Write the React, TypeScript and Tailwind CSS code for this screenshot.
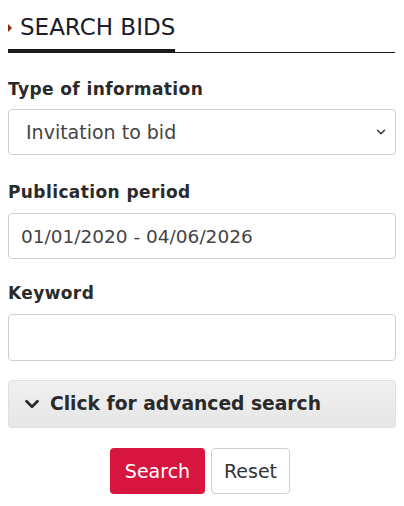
import { ChevronDown } from 'lucide-react';

export default function App() {
  return (
    <div className="w-[404px] h-[506px] bg-white font-['DejaVu_Sans',sans-serif] text-[#222]">
      <div className="px-2 pt-[12px]">
        {/* Title */}
        <div className="flex items-center h-[30px]">
          <span className="w-0 h-0 border-y-[4px] border-y-transparent border-l-[4px] border-l-[#8b2a12] mr-[8px] mt-[2px]" />
          <h1 className="text-[23px] leading-none text-[#1c1c2a] uppercase">Search Bids</h1>
        </div>
        <div className="flex items-end mt-[7px]">
          <div className="w-[167px] h-[4px] bg-[#1a1a1a]" />
          <div className="flex-1 h-px bg-[#1a1a1a] mr-[1px]" />
        </div>

        {/* Form */}
        <div className="mt-[24px]">
          <label className="block text-[17px] font-bold leading-[24px] tracking-[0.4px] text-[#2a2a2a]">Type of information</label>
          <div className="relative mt-[8px]">
            <select className="w-full h-[46px] appearance-none rounded-[4px] border border-[#cfcfcf] bg-white pl-[17px] text-[19px] text-[#444] outline-none">
              <option>Invitation to bid</option>
            </select>
            <ChevronDown className="absolute right-[8px] top-[16px] w-[14px] h-[14px] text-[#333]" strokeWidth={2.5} />
          </div>

          <label className="block mt-[25px] text-[17px] font-bold leading-[24px] tracking-[0.4px] text-[#2a2a2a]">Publication period</label>
          <input
            readOnly
            value="01/01/2020 - 04/06/2026"
            className="mt-[9px] w-full h-[46px] rounded-[4px] border border-[#cfcfcf] bg-white px-[12px] text-[18.5px] text-[#444] outline-none"
          />

          <label className="block mt-[22px] text-[17px] font-bold leading-[24px] tracking-[0.4px] text-[#2a2a2a]">Keyword</label>
          <input className="mt-[9px] w-full h-[47px] rounded-[4px] border border-[#cfcfcf] bg-white px-[12px] text-[18px] outline-none" />

          <button className="mt-[19px] w-full h-[48px] flex items-center gap-[7px] rounded-[4px] border border-[#e0e0e0] bg-gradient-to-b from-[#f0f0f0] to-[#e6e6e6] pl-[12px] text-left">
            <ChevronDown className="w-[22px] h-[22px] text-[#2a2a2a]" strokeWidth={3} />
            <span className="text-[18.7px] font-bold text-[#2a2a2a]">Click for advanced search</span>
          </button>

          <div className="flex justify-center gap-[6px] mt-[20px] pr-[4px]">
            <button className="w-[95px] h-[46px] rounded-[4px] bg-[#d6163e] text-[19px] text-white">Search</button>
            <button className="w-[79px] h-[46px] rounded-[4px] border border-[#cfcfcf] bg-white text-[19px] text-[#333]">Reset</button>
          </div>
        </div>
      </div>
    </div>
  );
}
